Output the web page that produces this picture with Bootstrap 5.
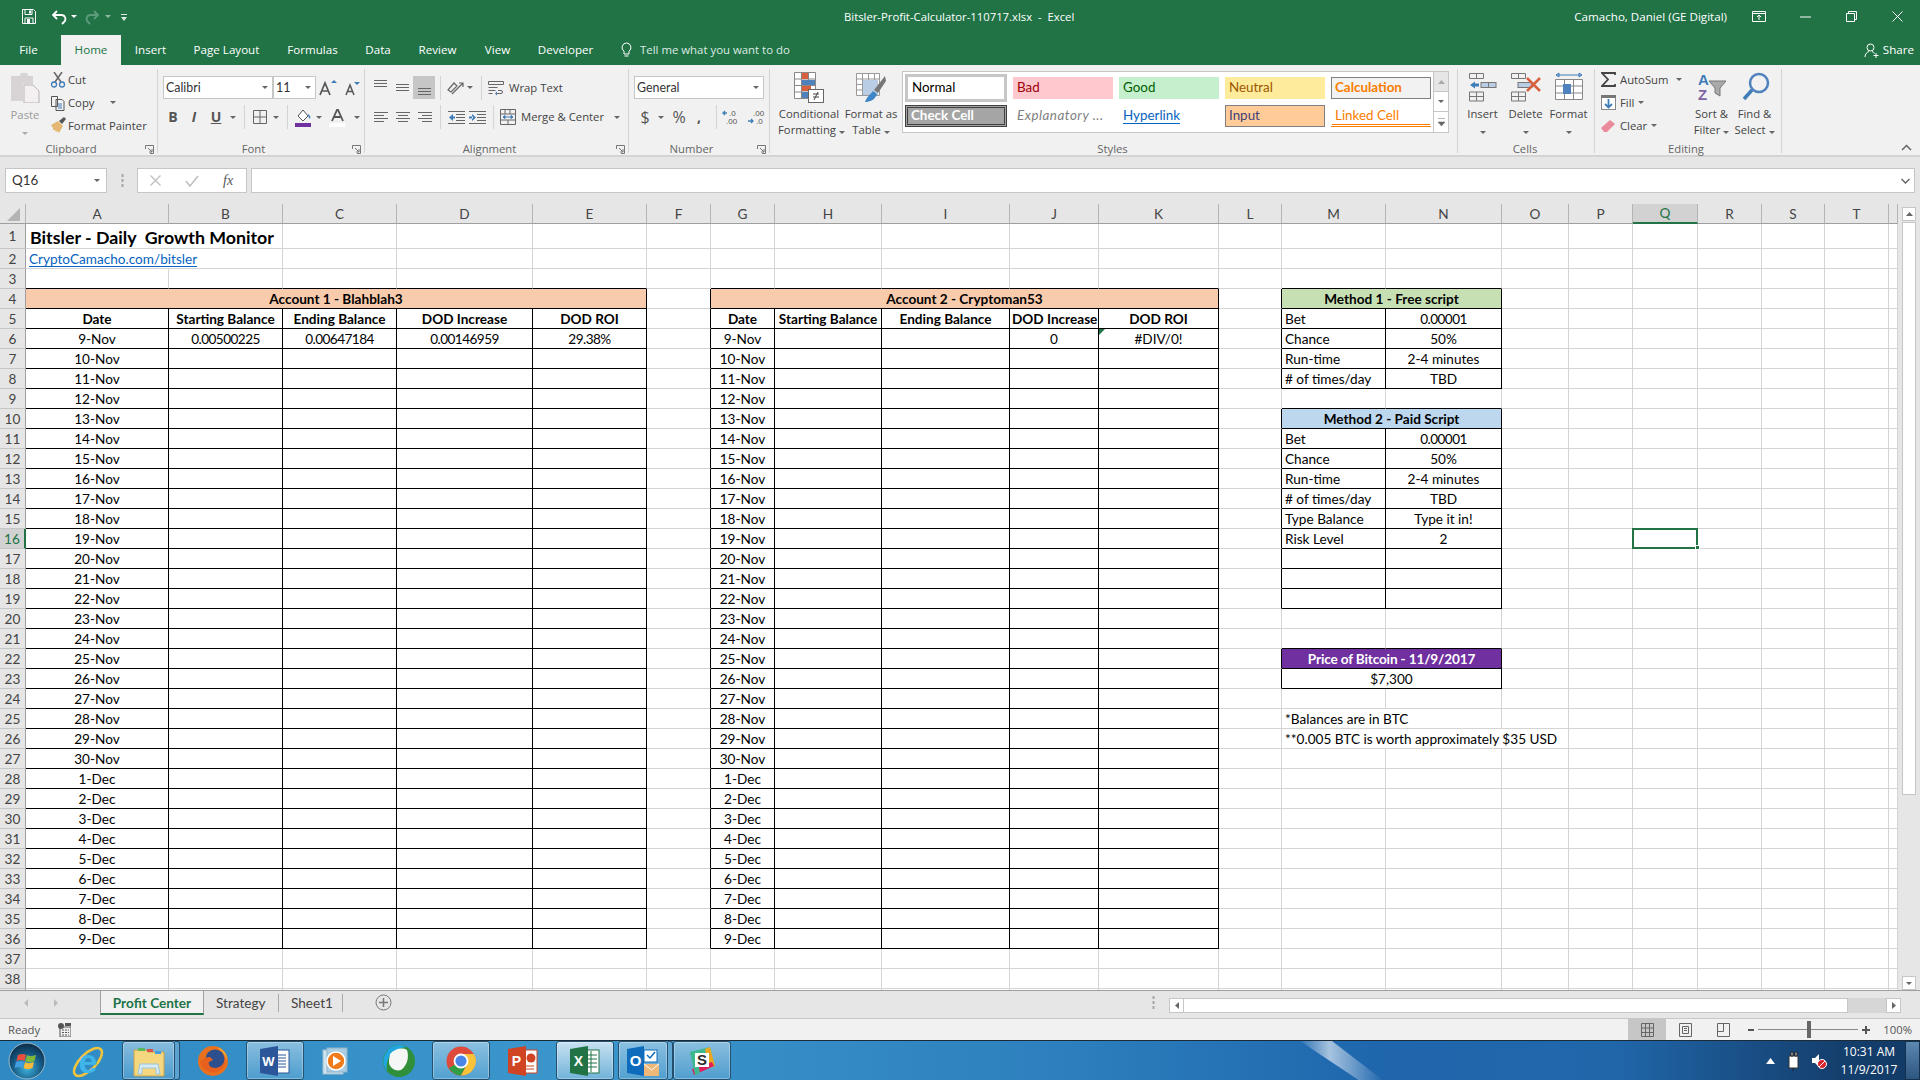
<!DOCTYPE html>
<html lang="en">
<head>
  <meta charset="UTF-8">
  <title>Bitsler-Profit-Calculator-110717.xlsx - Excel</title>
  <link href="https://cdn.jsdelivr.net/npm/bootstrap@5.3.0/dist/css/bootstrap.min.css" rel="stylesheet">
  <style>
    html, body { margin: 0; height: 100%; overflow: hidden; }
    body { width: 1920px; height: 1080px; background: #f1f1f1; color: #444; font: 11.3px/14px "Open Sans", sans-serif; }
    svg { display: block; flex: none; }

    .tw-10{width:10px}.tw-12{width:12px}.tw-18{width:18px}.tw-20{width:20px}.tw-22{width:22px}.tw-43{width:43px}
    .tw-50{width:50px}.tw-53{width:53px}.tw-54{width:54px}.tw-58{width:58px}.tw-62{width:62px}.tw-66{width:66px}
    .tw-68{width:68px}.tw-89{width:89px}
    .ms-1px{margin-left:1px}.ms-2px{margin-left:2px}.ms-12{margin-left:12px}.ms-13{margin-left:13px}.ms-17{margin-left:17px}.ms-18{margin-left:18px}
    .ms-11{margin-left:11px}.ms-6px{margin-left:6px}

    /* title bar + tabs */
    .xl-head { height: 65px; background: #217346; color: #fff; flex: none; }
    .xl-title { height: 33px; }
    .xl-qat { width: 844px; padding-left: 22px; }
    .xl-doc { font-size: 11.3px; }
    .xl-user { margin-right: 9px; font-size: 11.6px; }
    .xl-winbtn { width: 46px; height: 33px; }
    .xl-tabs { height: 30px; margin-top: 2px; font-size: 11.6px; }
    .xl-tab { height: 30px; line-height: 30px; text-align: center; color: #fff; flex: none; }
    .xl-tab.on { background: #f1f1f1; color: #217346; }
    .xl-tell { color: #dcebe3; margin-left: 14px; font-size: 11.4px; }
    .xl-share { margin-right: 6px; }

    /* ribbon */
    .rb { height: 92px; background: #f1f1f1; border-bottom: 2px solid #d4d4d4; flex: none; padding-top: 4px; }
    .rg { height: 84px; border-right: 1px solid #d4d4d4; position: relative; flex: none; }
    .rg-clip { width: 158px; } .rg-font { width: 207px; padding-left: 5px; } .rg-align { width: 264px; padding-left: 4px; }
    .rg-num { width: 141px; padding-left: 5px; } .rg-sty { width: 688px; padding-left: 8px; }
    .rg-cells { width: 137px; padding-left: 3px; } .rg-edit { width: 187px; padding-left: 6px; }
    .rg-body { height: 73px; display: flow-root; }
    .rg-label { height: 14px; text-align: center; color: #666; }
    .rg-clip .rg-label { padding-right: 15px; } .rg-font .rg-label { padding-right: 20px; } .rg-align .rg-label { padding-right: 18px; }
    .rg-num .rg-label { padding-right: 20px; } .rg-sty .rg-label { padding-right: 10px; } .rg-cells .rg-label { padding-right: 5px; }
    .rg-edit .rg-label { padding-right: 10px; }
    .rg-launch { position: absolute; right: 3px; bottom: -1px; }
    .rb-stack { margin-top: -1px; }
    .rb-line { height: 23px; white-space: nowrap; }
    .rb-row1 { height: 23px; margin-top: 7px; }
    .rb-row2 { height: 24px; margin-top: 6px; }
    .ti { height: 23px; flex: none; display: flex; align-items: center; justify-content: center; }
    .ti.on { background: #c6c6c6; }
    .ti-b { font-size: 14px; font-weight: 700; color: #555; }
    .ti-n { font-size: 16px; color: #555; }
    .rsep { width: 1px; height: 24px; background: #d4d4d4; margin: 0 5px; flex: none; }
    .caret { width: 0; height: 0; border: 3px solid transparent; border-top: 3.5px solid #666; border-bottom: 0; flex: none; display: inline-block; }
    .caret.dim { border-top-color: #aaa; }
    .caret.lite { border-top-color: #fff; }
    .caret.mid { border-top-color: #8fb9a3; }
    .rb-sel { height: 23px; background: #fff; border: 1px solid #c6c6c6; padding: 0 4px 0 2px; font: 12.4px/21px "Lato", sans-serif; color: #333; flex: none; }
    .rb-sel.fnt { width: 110px; }
    .rb-sel.siz { width: 43px; }
    .rb-sel.gen { width: 130px; }
    .bigbtn { flex: none; text-align: center; line-height: 16px; }
    .bigbtn .bic { height: 31px; margin-top: 3px; margin-bottom: 3px; }
    .dimtxt { color: #9a9a9a; }

    .sty-gal { width: 547px; height: 62px; margin-top: 2px; background: #fff; border: 1px solid #c6c6c6; flex: none; }
    .sty-grid { display: grid; grid-template-columns: 102px 100px 100px 100px 100px; grid-auto-rows: 22px; column-gap: 6px; row-gap: 6px; padding: 5px 0 0 2px; width: 530px; }
    .sty { font: 13.4px/19px "Lato", sans-serif; padding-left: 3px; color: #000; border: 1px solid transparent; white-space: nowrap; overflow: hidden; }
    .sty-normal { outline: 3px solid #c6c6c6; margin: 0 3px; }
    .sty-bad { background: #ffc7ce; color: #9c0006; }
    .sty-good { background: #c6efce; color: #006100; }
    .sty-neutral { background: #ffeb9c; color: #9c5700; }
    .sty-calc { background: #f2f2f2; color: #fa7d00; font-weight: 700; border-color: #7f7f7f; }
    .sty-check { background: #a5a5a5; color: #fff; font-weight: 700; border: 3px double #3f3f3f; line-height: 15px; }
    .sty-expl { color: #7f7f7f; font-style: italic; letter-spacing: .5px; }
    .sty-link span { color: #0563c1; border-bottom: 1px solid #0563c1; }
    .sty-input { background: #fc9; color: #3f3f76; border-color: #7f7f7f; }
    .sty-linked { color: #fa7d00; border-bottom: 3px double #fa7d00; line-height: 18px; }
    .sty-scr { width: 15px; margin-left: auto; border-left: 1px solid #c6c6c6; }
    .sty-scr div { height: 20px; border-bottom: 1px solid #c6c6c6; }
    .sty-scr .off { background: #e6e6e6; }
    .sty-scr div:last-child { border-bottom: 0; }

    /* formula bar */
    .fx-bar { height: 47px; background: #e6e6e6; padding-top: 11px; flex: none; }
    .fx-box { height: 25px; background: #fff; border: 1px solid #c6c6c6; flex: none; }
    .fx-name { width: 102px; margin-left: 5px; padding: 0 6px; font: 13.4px/23px "Lato", sans-serif; color: #333; }
    .fx-dots { width: 30px; height: 25px; }
    .fx-btns { width: 110px; }
    .fx-input { width: 1664px; margin-left: 4px; }
    .fx-f { font: italic 14px "Liberation Serif", serif; color: #555; }

    /* sheet */
    .xl-main { height: 786px; flex: none; background: #e6e6e6; }
    .xl-grid { width: 1898px; height: 786px; overflow: hidden; background: #fff; flex: none; }
    table.xl-sheet { border-collapse: separate; border-spacing: 0; table-layout: fixed; width: 1898px; font: 13.6px/18px "Lato", "Liberation Sans", sans-serif; color: #000; }
    .xl-sheet tr { height: 20px; }
    .xl-sheet tr.tall { height: 25px; }
    .xl-sheet td { padding: 0 2px; height: 20px; text-align: center; white-space: nowrap; overflow: visible; border-right: 1px solid #d4d4d4; border-bottom: 1px solid #d4d4d4; }
    .xl-sheet td.br { border-right-color: #000; }
    .xl-sheet td.bb { border-bottom-color: #000; }
    .xl-sheet th { font-weight: 400; color: #444; background: #e6e6e6; text-align: center; padding: 0; }
    .xl-sheet thead th { height: 19px; border-right: 1px solid #b4b4b4; border-bottom: 1px solid #9f9f9f; }
    .xl-sheet tbody th { border-right: 1px solid #9f9f9f; border-bottom: 1px solid #c6c6c6; }
    .xl-sheet th.sel { background: #d2d2d2; color: #217346; }
    .xl-sheet thead th.sel { border-bottom: 2px solid #217346; }
    .xl-sheet tbody th.sel { border-right: 2px solid #217346; }
    .xl-sheet td.lft { text-align: left; padding-left: 3px; }
    .xl-sheet td.b { font-weight: 700; }
    .xl-sheet td.num { letter-spacing: -.55px; }
    .xl-sheet td.dt { letter-spacing: -.15px; }
    .xl-sheet td.ttl { font-size: 17.8px; font-weight: 700; text-align: left; padding-left: 4px; white-space: pre; line-height: 22px; vertical-align: bottom; }
    .xl-sheet td.lnk span { color: #0563c1; border-bottom: 1px solid #0563c1; line-height: 14px; display: inline-block; }
    .xl-sheet td.f-org { background: #f8cbad; }
    .xl-sheet td.f-grn { background: #c6e0b4; }
    .xl-sheet td.f-blu { background: #bdd7ee; }
    .xl-sheet td.f-pur { background: #7030a0; color: #fff; }
    .xl-sheet td.warn { position: relative; }
    .xl-sheet td.warn::before { content: ""; position: absolute; left: 0; top: 0; border: 3px solid transparent; border-top-color: #217346; border-left-color: #217346; }
    .xl-sheet td.cur { position: relative; }
    .xl-sheet td.cur::before { content: ""; position: absolute; left: -1px; top: -1px; right: -1px; bottom: -1px; border: 2px solid #217346; }
    .xl-sheet td.cur::after { content: ""; position: absolute; right: -3px; bottom: -2px; width: 5px; height: 5px; background: #217346; border: 1px solid #fff; }
    .vscr { width: 22px; padding: 3px 4px 0; display: flex; flex-direction: column; }
    .vbtn { height: 14px; background: #fff; border: 1px solid #c6c6c6; flex: none; }
    .vthumb { height: 573px; margin-top: 1px; background: #fff; border: 1px solid #c6c6c6; flex: none; }

    /* sheet tabs + status */
    .xl-strip { height: 29px; background: #e6e6e6; border-top: 1px solid #9f9f9f; border-bottom: 1px solid #c6c6c6; flex: none; font: 13.6px/24px "Lato", sans-serif; color: #444; }
    .st-nav { width: 100px; }
    .st-tab { height: 24px; padding-left: 12px; flex: none; position: relative; }
    .st-tab.on { width: 104px; padding: 0; text-align: center; background: #f1f1f1; color: #217346; font-weight: 700; border-left: 1px solid #9f9f9f; border-right: 1px solid #9f9f9f; border-bottom: 2px solid #217346; }
    .st-a { width: 75px; } .st-b { width: 64px; }
    .st-rule { border-right: 1px solid #aaa; height: 18px; margin-top: 3px; line-height: 18px; }
    .st-plus { margin-left: 32px; width: 777px; }
    .hs-dots { width: 17px; }
    .hs { width: 732px; height: 15px; margin-top: 7px; background: #d6d6d6; }
    .hs-btn { width: 15px; height: 15px; background: #fff; border: 1px solid #c6c6c6; flex: none; }
    .hs-thumb { width: 664px; height: 15px; background: #fff; border: 1px solid #c6c6c6; border-left: 0; flex: none; }
    .xl-status { height: 21px; background: #f1f1f1; flex: none; padding-left: 8px; color: #555; }
    .sb-view { width: 38px; height: 21px; }
    .sb-view.on { background: #c6c6c6; }
    .sb-zoom { width: 100px; height: 1px; background: #888; position: relative; margin: 0 4px; }
    .sb-zoom::after { content: ""; position: absolute; left: 49px; top: -8px; width: 4px; height: 17px; background: #666; }

    /* taskbar */
    .tk { height: 40px; flex: none; position: relative; overflow: hidden; border-top: 1px solid #1c2b38; background: linear-gradient(90deg, #2f8ac4 0%, #3b96cc 30%, #2d80bd 55%, #1f66ad 72%, #2067aa 84%, #143e6c 96%, #123a66 100%); }
    .tk-glow { position: absolute; left: 0; top: 0; }
    .tk-slot { height: 39px; flex: none; position: relative; display: flex; align-items: center; justify-content: center; }
    .tk-on { background: linear-gradient(180deg, rgba(255,255,255,.42), rgba(255,255,255,.12)); border: 1px solid #23506e; border-radius: 3px; box-shadow: inset 0 0 0 1px rgba(255,255,255,.3); }
    .tk-on.act { background: linear-gradient(180deg, rgba(255,255,255,.72), rgba(255,255,255,.28)); }
    .tk-gap4 { width: 4px; flex: none; }
    .tk-stack { width: 5px; height: 39px; flex: none; border: 1px solid #23506e; border-left: 0; border-radius: 0 3px 3px 0; background: rgba(255,255,255,.2); }
    .tk-tray { position: relative; margin-left: auto; color: #fff; font: 12px/18px "Open Sans", sans-serif; }
    .tk-clock { width: 72px; text-align: center; margin-left: 6px; }
    .tk-show { width: 15px; height: 39px; background: linear-gradient(180deg, #5d88b0, #2c5580); border: 1px solid #16314f; }
  </style>
</head>
<body class="d-flex flex-column">

<!-- Title bar and ribbon tabs -->
<div class="xl-head">
  <div class="xl-title d-flex align-items-center">
    <div class="xl-qat d-flex align-items-center">
      <svg width="14" height="15" viewBox="0 0 14 15"><path d="M.5.500h11l2 2v12H.5z" fill="none" stroke="#fff"/><path d="M3 1v4.500h7V1M3 14V9h8v5" fill="none" stroke="#fff"/><rect x="7" y="1.500" width="2" height="3" fill="#fff"/><rect x="5" y="10" width="3" height="4" fill="#fff"/></svg>
      <svg class="ms-3" width="15" height="16" viewBox="0 0 15 16"><path d="M5 2 1 6l4 4M1.500 6H10a4 4 0 0 1 2 7l-2 2" fill="none" stroke="#fff" stroke-width="1.800"/></svg>
      <span class="caret lite ms-1"></span>
      <svg class="ms-2" width="16" height="16" viewBox="0 0 16 16"><path d="M9 2l4 4-4 4M12.500 6H5a4 4 0 0 0-2 7l2 2" fill="none" stroke="#5f9c7e" stroke-width="1.800"/></svg>
      <span class="caret mid ms-1"></span>
      <svg class="ms-2" width="10" height="10" viewBox="0 0 10 10"><path d="M2 2h6v1H2zM2 5h6L5 9z" fill="#dcebe3"/></svg>
    </div>
    <div class="xl-doc">Bitsler-Profit-Calculator-110717.xlsx&nbsp; -&nbsp; Excel</div>
    <div class="ms-auto d-flex align-items-center">
      <div class="xl-user">Camacho, Daniel (GE Digital)</div>
      <div class="xl-winbtn d-flex align-items-center justify-content-center"><svg width="14" height="11" viewBox="0 0 14 11"><path d="M.5.500h13v10H.5zM.5 2.500h13M7 9V4M5 6l2-2 2 2" fill="none" stroke="#fff"/></svg></div>
      <div class="xl-winbtn d-flex align-items-center justify-content-center"><svg width="11" height="2" viewBox="0 0 11 2"><path d="M0 1h11" stroke="#fff"/></svg></div>
      <div class="xl-winbtn d-flex align-items-center justify-content-center"><svg width="11" height="11" viewBox="0 0 11 11"><path d="M.5 2.500h8v8h-8zM2.500 2.500V.5h8v8H8.500" fill="none" stroke="#fff"/></svg></div>
      <div class="xl-winbtn d-flex align-items-center justify-content-center"><svg width="11" height="11" viewBox="0 0 11 11"><path d="M.5.500l10 10M10.500.5l-10 10" stroke="#fff"/></svg></div>
    </div>
  </div>
  <div class="xl-tabs d-flex align-items-center" id="tabRow"></div>
</div>

<!-- Ribbon -->
<div class="rb d-flex">
  <section class="rg rg-clip">
    <div class="rg-body d-flex">
      <div class="bigbtn tw-50 dimtxt">
        <svg class="mx-auto mt-1" width="30" height="30" viewBox="0 0 30 30"><path d="M1 3h9l1-3h6l1 3h5v8H13v17H1z" fill="#d8d3d5"/><path d="M14 12h9l6 6v12H14z" fill="#f4f0f2" stroke="#b9b4b6"/></svg>
        <div class="mt-1">Paste</div>
        <span class="caret dim mt-1"></span>
      </div>
      <div class="rb-stack">
        <div class="rb-line d-flex align-items-center"><svg class="tw-18" width="18" height="16" viewBox="0 0 18 16"><path d="M4 0l7 10M12 0 5 10" stroke="#666" stroke-width="1.500"/><circle cx="4" cy="12.500" r="2.500" fill="none" stroke="#3f7cb8" stroke-width="1.300"/><circle cx="12" cy="12.500" r="2.500" fill="none" stroke="#3f7cb8" stroke-width="1.300"/></svg>Cut</div>
        <div class="rb-line d-flex align-items-center"><svg class="tw-18" width="18" height="16" viewBox="0 0 18 16"><path d="M1.500 1.500h6v10h-6zM6 4.500h6l2 2v9H6z" fill="#f1f1f1" stroke="#555"/><path d="M8 9h4M8 11h4M8 13h4" stroke="#3f7cb8"/></svg>Copy<span class="caret ms-3"></span></div>
        <div class="rb-line d-flex align-items-center"><svg class="tw-18" width="18" height="17" viewBox="0 0 18 17"><path d="M9 4l5-4 2 2-4 5z" fill="#555"/><path d="M1 8l7-4 5 5-4 7-2-2-1 1-1-2-2 0 0-2z" fill="#e4b773"/></svg>Format Painter</div>
      </div>
    </div>
    <div class="rg-label">Clipboard</div>
    <svg class="rg-launch" width="9" height="9" viewBox="0 0 9 9"><path d="M.5 4V.5h8v8H5M3 3l4 4M7 4v3H4" fill="none" stroke="#777"/></svg>
  </section>

  <section class="rg rg-font">
    <div class="rg-body">
      <div class="rb-row1 d-flex align-items-center">
        <div class="rb-sel fnt d-flex align-items-center justify-content-between">Calibri<span class="caret"></span></div>
        <div class="rb-sel siz d-flex align-items-center justify-content-between">11<span class="caret"></span></div>
        <div class="ti tw-22 ms-1px"><svg width="20" height="18" viewBox="0 0 20 18"><path d="M2 16 7 4l5 12M4 12h6" fill="none" stroke="#555" stroke-width="1.700"/><path d="M13 4l3-3 3 3z" fill="#3f7cb8"/></svg></div>
        <div class="ti tw-18 ms-1"><svg width="15" height="16" viewBox="0 0 15 16"><path d="M1 15 5 5l4 10M2.500 11.500h5" fill="none" stroke="#555" stroke-width="1.500"/><path d="M9 2h6l-3 3z" fill="#3f7cb8"/></svg></div>
      </div>
      <div class="rb-row2 d-flex align-items-center">
        <div class="ti tw-20 ti-b">B</div>
        <div class="ti tw-22 ti-b fst-italic">I</div>
        <div class="ti tw-22 ti-b text-decoration-underline">U</div>
        <div class="ti tw-12"><span class="caret"></span></div>
        <div class="rsep"></div>
        <div class="ti tw-20"><svg width="14" height="14" viewBox="0 0 14 14"><path d="M.5.500h13v13H.5zM7 .5v13M.5 7h13" fill="none" stroke="#666"/></svg></div>
        <div class="ti tw-12"><span class="caret"></span></div>
        <div class="rsep"></div>
        <div class="ti tw-20"><svg width="17" height="19" viewBox="0 0 17 19"><path d="M3 8l5-6 5 6-5 5z" fill="#fff" stroke="#555"/><path d="M13 6c2 1 3 3 2 5-1-1-2-3-2-5z" fill="#3f7cb8"/><rect y="15" width="16" height="4" fill="#7030a0"/></svg></div>
        <div class="ti tw-12"><span class="caret"></span></div>
        <div class="ti tw-20 ms-2px"><svg width="17" height="19" viewBox="0 0 17 19"><path d="M3 13 8 2h1l5 11M5 9h7" fill="none" stroke="#555" stroke-width="1.800"/><rect y="15" width="16" height="4" fill="#fff"/></svg></div>
        <div class="ti tw-12 ms-1"><span class="caret"></span></div>
      </div>
    </div>
    <div class="rg-label">Font</div>
    <svg class="rg-launch" width="9" height="9" viewBox="0 0 9 9"><path d="M.5 4V.5h8v8H5M3 3l4 4M7 4v3H4" fill="none" stroke="#777"/></svg>
  </section>

  <section class="rg rg-align">
    <div class="rg-body">
      <div class="rb-row1 d-flex align-items-center">
        <div class="ti tw-22"><svg width="15" height="17" viewBox="0 0 15 17"><path d="M1 1.500h13M1 4.500h13M1 7.500h13" stroke="#666"/></svg></div>
        <div class="ti tw-22"><svg width="15" height="17" viewBox="0 0 15 17"><path d="M1 5.500h13M1 8.500h13M1 11.500h13" stroke="#666"/></svg></div>
        <div class="ti tw-22 on"><svg width="15" height="17" viewBox="0 0 15 17"><path d="M1 9.500h13M1 12.500h13M1 15.500h13" stroke="#666"/></svg></div>
        <div class="rsep"></div>
        <div class="ti tw-18"><svg width="17" height="16" viewBox="0 0 17 16"><path d="M1 10l6-7 3 3-6 6zM5 14l11-11M12 3h4v4" fill="none" stroke="#666" stroke-width="1.200"/></svg></div>
        <div class="ti tw-12"><span class="caret"></span></div>
        <div class="rsep ms-17"></div>
        <div class="ti tw-18"><svg width="16" height="16" viewBox="0 0 16 16"><path d="M.5 1.500h15v3H.5zM.5 7.500h9M.5 10.500h7M.5 13.500h4M10 10.500h3a1.500 1.500 0 0 1 0 3H9" fill="none" stroke="#666"/><path d="M9 11.500l-2 2 2 2z" fill="#3f7cb8"/></svg></div>
        <span class="ms-1 text-nowrap">Wrap Text</span>
      </div>
      <div class="rb-row2 d-flex align-items-center">
        <div class="ti tw-22"><svg width="15" height="13" viewBox="0 0 15 13"><path d="M1 1.500h14M1 4.500h10M1 7.500h14M1 10.500h10" stroke="#666"/></svg></div>
        <div class="ti tw-22"><svg width="15" height="13" viewBox="0 0 15 13"><path d="M1 1.500h14M3 4.500h10M1 7.500h14M3 10.500h10" stroke="#666"/></svg></div>
        <div class="ti tw-22"><svg width="15" height="13" viewBox="0 0 15 13"><path d="M1 1.500h14M5 4.500h10M1 7.500h14M5 10.500h10" stroke="#666"/></svg></div>
        <div class="rsep"></div>
        <div class="ti tw-20"><svg width="17" height="13" viewBox="0 0 17 13"><path d="M0 .5h17M8 3.500h9M8 6.500h9M8 9.500h9M0 12.500h17" stroke="#666"/><path d="M1 6.500 5 3v7zM4 5.500h3v2H4z" fill="#3f7cb8"/></svg></div>
        <div class="ti tw-22"><svg width="17" height="13" viewBox="0 0 17 13"><path d="M0 .5h17M8 3.500h9M8 6.500h9M8 9.500h9M0 12.500h17" stroke="#666"/><path d="M7 6.500 3 3v7zM0 5.500h4v2H0z" fill="#3f7cb8"/></svg></div>
        <div class="rsep"></div>
        <div class="ti tw-18"><svg width="16" height="16" viewBox="0 0 16 16"><path d="M.5.500h15v15H.5zM.5 5h15M.5 11h15M5 .5V5M10 .5V5M8 11v4.500" fill="none" stroke="#666"/><path d="M3 8h10M3 8l2-1.500v3zM13 8l-2-1.500v3z" fill="#3f7cb8" stroke="#3f7cb8"/></svg></div>
        <span class="ms-1 text-nowrap">Merge &amp; Center</span>
        <span class="caret ms-auto me-2"></span>
      </div>
    </div>
    <div class="rg-label">Alignment</div>
    <svg class="rg-launch" width="9" height="9" viewBox="0 0 9 9"><path d="M.5 4V.5h8v8H5M3 3l4 4M7 4v3H4" fill="none" stroke="#777"/></svg>
  </section>

  <section class="rg rg-num">
    <div class="rg-body">
      <div class="rb-row1 d-flex align-items-center">
        <div class="rb-sel gen d-flex align-items-center justify-content-between">General<span class="caret"></span></div>
      </div>
      <div class="rb-row2 d-flex align-items-center">
        <div class="ti tw-22 ti-n">$</div>
        <div class="ti tw-10"><span class="caret"></span></div>
        <div class="ti tw-22 ms-2px ti-n">%</div>
        <div class="ti tw-18 ti-b">,</div>
        <div class="rsep ms-2"></div>
        <div class="ti tw-20 lh-1"><svg width="20" height="16" viewBox="0 0 20 16"><path d="M5 4H1M3 2 1 4l2 2" fill="none" stroke="#3f7cb8" stroke-width="1.300"/><text x="7" y="7" font-size="8" font-family="Liberation Sans" fill="#555">.0</text><text x="4" y="15" font-size="8" font-family="Liberation Sans" fill="#555">.00</text></svg></div>
        <div class="ti tw-22 ms-1 lh-1"><svg width="20" height="16" viewBox="0 0 20 16"><text x="6" y="7" font-size="8" font-family="Liberation Sans" fill="#555">.00</text><path d="M1 12h5M4 10l2 2-2 2" fill="none" stroke="#3f7cb8" stroke-width="1.300"/><text x="9" y="15" font-size="8" font-family="Liberation Sans" fill="#555">.0</text></svg></div>
      </div>
    </div>
    <div class="rg-label">Number</div>
    <svg class="rg-launch" width="9" height="9" viewBox="0 0 9 9"><path d="M.5 4V.5h8v8H5M3 3l4 4M7 4v3H4" fill="none" stroke="#777"/></svg>
  </section>

  <section class="rg rg-sty">
    <div class="rg-body d-flex">
      <div class="bigbtn tw-62">
        <div class="bic"><svg class="mx-auto" width="30" height="31" viewBox="0 0 30 31"><path d="M.5.500h21v26H.5zM7.500.5v26M14.500.5v26M.5 7h21M.5 13.500h21M.5 20h21" fill="#fff" stroke="#888"/><rect x="8" y="1" width="6" height="6" fill="#d9603f"/><rect x="8" y="8" width="13" height="5" fill="#4f81bd"/><rect x="8" y="14" width="9" height="5" fill="#d9603f"/><rect x="8" y="20" width="6" height="6" fill="#4f81bd"/><rect x="14.500" y="17.500" width="15" height="13" fill="#fff" stroke="#666"/><path d="M19 22h6M19 25h6M24 20l-4 8" stroke="#444" fill="none"/></svg></div>
        <div>Conditional</div>
        <div class="text-nowrap">Formatting <span class="caret"></span></div>
      </div>
      <div class="bigbtn tw-62">
        <div class="bic"><svg class="mx-auto" width="30" height="31" viewBox="0 0 30 31"><path d="M.5 1.500h23v22H.5zM6.500 1.500v22M12.500 1.500v22M18.500 1.500v22M.5 7h23M.5 12.500h23M.5 18h23" fill="#fff" stroke="#999"/><rect x="7" y="8" width="15" height="15" fill="#b9cde5"/><path d="M29 4 18 18l4 3 8-12z" fill="#777"/><path d="M17 19c-2 3-6 5-8 11 5 0 10-2 12-8z" fill="#3f86c9"/></svg></div>
        <div class="text-nowrap">Format as</div>
        <div class="text-nowrap">Table <span class="caret"></span></div>
      </div>
      <div class="sty-gal d-flex">
        <div class="sty-grid">
          <div class="sty sty-normal">Normal</div>
          <div class="sty sty-bad">Bad</div>
          <div class="sty sty-good">Good</div>
          <div class="sty sty-neutral">Neutral</div>
          <div class="sty sty-calc">Calculation</div>
          <div class="sty sty-check">Check Cell</div>
          <div class="sty sty-expl">Explanatory ...</div>
          <div class="sty sty-link"><span>Hyperlink</span></div>
          <div class="sty sty-input">Input</div>
          <div class="sty sty-linked">Linked Cell</div>
        </div>
        <div class="sty-scr">
          <div class="off d-flex align-items-center justify-content-center"><svg width="7" height="4" viewBox="0 0 7 4"><path d="M0 4l3.500-4 3.500 4z" fill="#aaa"/></svg></div>
          <div class="d-flex align-items-center justify-content-center"><span class="caret"></span></div>
          <div class="d-flex flex-column align-items-center justify-content-center"><svg width="7" height="8" viewBox="0 0 7 8"><path d="M0 .5h7M0 4l3.500 4 3.500-4z" fill="#666" stroke="#666" stroke-width=".5"/></svg></div>
        </div>
      </div>
    </div>
    <div class="rg-label">Styles</div>
  </section>

  <section class="rg rg-cells">
    <div class="rg-body d-flex">
      <div class="bigbtn tw-43">
        <div class="bic"><svg class="mx-auto" width="28" height="30" viewBox="0 0 28 30"><path d="M.5 1.500h14v5H.5zM7.500 1.500v5M.5 20h14v9H.5zM.5 24.500h14M7.500 20v9" fill="none" stroke="#777"/><rect x="12" y="10.500" width="15" height="5" fill="#b9cde5" stroke="#777"/><path d="M19.500 10.500v5" stroke="#777"/><path d="M1 13l5-3.500v2h4v3H6v2z" fill="#3f7cb8"/></svg></div>
        <div>Insert</div>
        <span class="caret d-inline-block mt-2"></span>
      </div>
      <div class="bigbtn tw-43">
        <div class="bic"><svg class="mx-auto" width="30" height="30" viewBox="0 0 30 30"><path d="M.5 1.500h14v5H.5zM7.500 1.500v5M.5 20h14v9H.5zM.5 24.500h14M7.500 20v9" fill="none" stroke="#777"/><rect x="7" y="10.500" width="14" height="5" fill="#b9cde5" stroke="#777"/><path d="M16 6l13 13M29 6 16 19" stroke="#d9603f" stroke-width="2.500"/></svg></div>
        <div>Delete</div>
        <span class="caret d-inline-block mt-2"></span>
      </div>
      <div class="bigbtn tw-43">
        <div class="bic"><svg class="mx-auto" width="28" height="30" viewBox="0 0 28 30"><path d="M1 3h26M1 3l3-2v4zM27 3l-3-2v4z" fill="none" stroke="#3f7cb8"/><path d="M.5 7.500h27v20H.5zM9.500 7.500v20M18.500 7.500v20M.5 14h27M.5 21h27" fill="#fff" stroke="#888"/><rect x="8" y="12" width="8" height="10" fill="#4f81bd"/></svg></div>
        <div>Format</div>
        <span class="caret d-inline-block mt-2"></span>
      </div>
    </div>
    <div class="rg-label">Cells</div>
  </section>

  <section class="rg rg-edit">
    <div class="rg-body d-flex">
      <div class="tw-89 rb-stack">
        <div class="rb-line d-flex align-items-center"><svg class="me-1" width="15" height="15" viewBox="0 0 15 15"><path d="M14 3V1H1l6 6.500L1 14h13v-2" fill="none" stroke="#444" stroke-width="1.800"/></svg>AutoSum<span class="caret ms-auto me-2"></span></div>
        <div class="rb-line d-flex align-items-center"><svg class="me-1" width="15" height="15" viewBox="0 0 15 15"><rect x=".5" y=".5" width="14" height="14" fill="#fff" stroke="#888"/><rect width="15" height="3" fill="#777"/><path d="M7.500 4v8M4 9l3.500 3.500L11 9" fill="none" stroke="#3f7cb8" stroke-width="1.800"/></svg>Fill <span class="caret ms-1"></span></div>
        <div class="rb-line d-flex align-items-center"><svg class="me-1" width="15" height="15" viewBox="0 0 15 15"><path d="M0 10 9 2l5 4-8 8H3z" fill="#e98b9a"/></svg>Clear <span class="caret ms-1"></span></div>
      </div>
      <div class="bigbtn tw-43">
        <div class="bic"><svg class="mx-auto" width="30" height="30" viewBox="0 0 30 30"><text x="1" y="13" font-size="15" font-weight="700" font-family="Liberation Sans" fill="#3f7cb8">A</text><text x="1" y="28" font-size="15" font-weight="700" font-family="Liberation Sans" fill="#8064a2">Z</text><path d="M12 9h17l-6 7v8l-5-3v-5z" fill="#aaa" stroke="#777"/></svg></div>
        <div>Sort &amp;</div>
        <div class="text-nowrap">Filter <span class="caret"></span></div>
      </div>
      <div class="bigbtn tw-43">
        <div class="bic"><svg class="mx-auto" width="30" height="30" viewBox="0 0 30 30"><circle cx="19" cy="11" r="9" fill="#f1f1f1" stroke="#4f81bd" stroke-width="2.500"/><path d="M12 18 4 27" stroke="#3f7cb8" stroke-width="3.500"/></svg></div>
        <div>Find &amp;</div>
        <div class="text-nowrap">Select <span class="caret"></span></div>
      </div>
    </div>
    <div class="rg-label">Editing</div>
  </section>
  <div class="flex-fill d-flex align-items-end justify-content-end pe-2 pb-1">
    <svg width="11" height="7" viewBox="0 0 11 7"><path d="M1 6l4.500-4.500L10 6" fill="none" stroke="#666" stroke-width="1.500"/></svg>
  </div>
</div>

<!-- Formula bar -->
<div class="fx-bar d-flex">
  <div class="fx-box fx-name d-flex align-items-center justify-content-between">Q16<span class="caret"></span></div>
  <div class="fx-dots d-flex align-items-center justify-content-center"><svg width="3" height="13" viewBox="0 0 3 13"><path d="M1.500 0v3M1.500 5v3M1.500 10v3" stroke="#a5a5a5" stroke-width="2"/></svg></div>
  <div class="fx-box fx-btns d-flex align-items-center">
    <svg class="ms-12" width="11" height="11" viewBox="0 0 11 11"><path d="M.5.500l10 10M10.500.5l-10 10" stroke="#c0c0c0" stroke-width="1.400"/></svg>
    <svg class="ms-4" width="14" height="12" viewBox="0 0 14 12"><path d="M1 6l4 5 8-10" fill="none" stroke="#c0c0c0" stroke-width="1.600"/></svg>
    <span class="fx-f ms-4">fx</span>
  </div>
  <div class="fx-box fx-input d-flex align-items-center justify-content-end pe-1"><svg width="9" height="6" viewBox="0 0 9 6"><path d="M.5 1l4 4 4-4" fill="none" stroke="#666" stroke-width="1.500"/></svg></div>
</div>

<!-- Worksheet -->
<div class="xl-main d-flex">
  <div class="xl-grid"><table class="xl-sheet" id="sheet"></table></div>
  <div class="vscr">
    <div class="vbtn d-flex align-items-center justify-content-center"><svg width="7" height="4" viewBox="0 0 7 4"><path d="M0 4l3.500-4 3.500 4z" fill="#666"/></svg></div>
    <div class="vthumb"></div>
    <div class="vbtn mt-auto d-flex align-items-center justify-content-center"><span class="caret"></span></div>
  </div>
</div>

<!-- Sheet tabs -->
<div class="xl-strip d-flex">
  <div class="st-nav d-flex align-items-center"><svg class="ms-4 mb-1" width="5" height="8" viewBox="0 0 5 8"><path d="M4 0 0 4l4 4z" fill="#bbb"/></svg><svg class="ms-4 mb-1" width="5" height="8" viewBox="0 0 5 8"><path d="M1 0l4 4-4 4z" fill="#bbb"/></svg></div>
  <div class="st-tab on">Profit Center</div>
  <div class="st-tab st-a st-rule">Strategy</div>
  <div class="st-tab st-b st-rule">Sheet1</div>
  <div class="st-plus d-flex align-items-center mb-1"><svg width="17" height="17" viewBox="0 0 17 17"><circle cx="8.500" cy="8.500" r="7.500" fill="none" stroke="#777"/><path d="M8.500 4v9M4 8.500h9" stroke="#777" stroke-width="1.500"/></svg></div>
  <div class="hs-dots d-flex align-items-center mb-1"><svg width="3" height="13" viewBox="0 0 3 13"><path d="M1.500 0v3M1.500 5v3M1.500 10v3" stroke="#a5a5a5" stroke-width="2"/></svg></div>
  <div class="hs d-flex">
    <div class="hs-btn d-flex align-items-center justify-content-center"><svg width="4" height="7" viewBox="0 0 4 7"><path d="M4 0 0 3.500 4 7z" fill="#666"/></svg></div>
    <div class="hs-thumb"></div>
    <div class="hs-btn ms-auto d-flex align-items-center justify-content-center"><svg width="4" height="7" viewBox="0 0 4 7"><path d="M0 0l4 3.500L0 7z" fill="#666"/></svg></div>
  </div>
</div>

<!-- Status bar -->
<div class="xl-status d-flex align-items-center">
  <span>Ready</span>
  <svg class="ms-18" width="13" height="14" viewBox="0 0 13 14"><rect x="2" y="4" width="11" height="10" fill="none" stroke="#555"/><circle cx="3" cy="3" r="3" fill="#555"/><rect x="7" width="6" height="3" fill="#555"/><path d="M4 7h7M4 9.500h7M4 12h7" stroke="#555" stroke-dasharray="2 1"/></svg>
  <div class="ms-auto d-flex align-items-center">
    <div class="sb-view on d-flex align-items-center justify-content-center"><svg width="13" height="14" viewBox="0 0 13 14"><path d="M.5.500h12v13H.5zM4.500.5v13M8.500.5v13M.5 5h12M.5 9.500h12" fill="none" stroke="#666"/></svg></div>
    <div class="sb-view d-flex align-items-center justify-content-center"><svg width="13" height="14" viewBox="0 0 13 14"><path d="M.5.500h12v13H.5z" fill="none" stroke="#666"/><path d="M3.500 3.500h6v7h-6zM5 5.500h3M5 7.500h3" fill="none" stroke="#666"/></svg></div>
    <div class="sb-view d-flex align-items-center justify-content-center"><svg width="13" height="14" viewBox="0 0 13 14"><path d="M.5.500h12v13H.5zM.5 8.500h6V.5" fill="none" stroke="#666"/></svg></div>
    <svg class="ms-6px" width="6" height="4" viewBox="0 0 6 4"><rect y="1" width="6" height="2" fill="#555"/></svg>
    <div class="sb-zoom"></div>
    <svg width="8" height="8" viewBox="0 0 8 8"><path d="M4 0v8M0 4h8" stroke="#555" stroke-width="2"/></svg>
    <span class="ms-13 me-2">100%</span>
  </div>
</div>

<!-- Windows taskbar -->
<div class="tk d-flex">
  <svg class="tk-glow" width="1920" height="40" viewBox="0 0 1920 40"><defs><linearGradient id="sh" x1="0" x2="1"><stop offset="0" stop-color="#fff" stop-opacity=".05"/><stop offset=".35" stop-color="#fff" stop-opacity=".6"/><stop offset="1" stop-color="#fff" stop-opacity="0"/></linearGradient></defs><path d="M1300 0h32l52 40h-24z" fill="url(#sh)"/></svg>

  <div class="tk-slot tw-54"><svg width="38" height="38" viewBox="0 0 38 38"><defs><radialGradient id="orb" cx=".5" cy=".7" r=".7"><stop offset="0" stop-color="#3fb4dd"/><stop offset=".6" stop-color="#14557f"/><stop offset="1" stop-color="#0d2a44"/></radialGradient></defs><circle cx="19" cy="19" r="18" fill="url(#orb)" stroke="#9dbccd"/><path d="M10 13c3-1.500 6-1.500 8 0l-1.500 6c-2-1.500-5-1.500-8 0z" fill="#e8503a"/><path d="M19 13c2 1.500 5 1.500 9 0l-1.500 6c-3 1.500-7 1.500-9 0z" fill="#7fb93a"/><path d="M8 20c3-1.500 6-1.500 8 0l-1.500 6c-2-1.500-5-1.500-8 0z" fill="#3f9de0"/><path d="M17 20c2 1.500 5 1.500 9 0l-1.500 6c-3 1.500-7 1.500-9 0z" fill="#f6b93b"/></svg></div>
  <div class="tk-slot tw-68"><svg width="34" height="38" viewBox="0 0 34 38"><ellipse cx="17" cy="20" rx="18" ry="8" transform="rotate(-45 17 20)" fill="none" stroke="#f3c33c" stroke-width="2.600"/><text x="17" y="31" text-anchor="middle" font-size="34" font-weight="700" font-family="Liberation Sans" fill="#3fb5ea">e</text></svg></div>
  <div class="tk-slot tk-on tw-53"><svg width="32" height="32" viewBox="0 0 32 32"><path d="M1 5h12l2 2h16v24H1z" fill="#f4d77e" stroke="#caa34c"/><rect x="5" y="3" width="7" height="3" fill="#5cb85c"/><rect x="14" y="4" width="6" height="3" fill="#d9534f"/><rect x="22" y="6" width="6" height="3" fill="#3f9de0"/><path d="M7 19h18l2 10h-4v-6H9v6H5z" fill="#d7ebf5" stroke="#9cc4d8"/></svg></div>
  <div class="tk-stack"></div>
  <div class="tk-slot tw-66"><svg width="32" height="32" viewBox="0 0 32 32"><circle cx="16" cy="16" r="15" fill="#e8711f"/><circle cx="18" cy="14" r="9.500" fill="#2d4f8e"/><path d="M3 17c2 8 10 12 17 10s9-8 8-12c-1 5-6 8-10 8s-7-3-6-6l4-2-3-3c-3 0-6 1-10 5z" fill="#e8601d"/><path d="M20 2c6 2 10 7 10 13-2-6-5-9-10-13z" fill="#f6b93b"/></svg></div>
  <div class="tk-slot tk-on tw-58"><svg width="30" height="32" viewBox="0 0 30 32"><rect x="12" y="5" width="17" height="23" fill="#fff" stroke="#2b579a"/><path d="M15 10h11M15 13h11M15 16h11M15 19h11M15 22h11" stroke="#2b579a"/><path d="M0 4 18 1v30L0 28z" fill="#2b579a"/><text x="8.500" y="21" text-anchor="middle" font-size="13" font-weight="700" font-family="Liberation Sans" fill="#fff">W</text></svg></div>
  <div class="tk-slot tw-62"><svg width="26" height="28" viewBox="0 0 26 28"><rect x="1" y="3" width="20" height="24" fill="#cfe3ef" stroke="#9fbfd1"/><rect x="5" y="1" width="20" height="24" fill="#a9cde2" stroke="#8fb5ca"/><circle cx="14" cy="14" r="9" fill="#f07b1c" stroke="#fff" stroke-width="1.500"/><path d="M11 9l8 5-8 5z" fill="#fff"/></svg></div>
  <div class="tk-slot tw-66"><svg width="34" height="34" viewBox="0 0 34 34"><circle cx="17" cy="17" r="16" fill="#2f8f3a"/><path d="M17 1a16 16 0 0 0-12 26C3 15 10 5 24 3a16 16 0 0 0-7-2z" fill="#21a7e0"/><path d="M8 10c4-5 12-7 17-4 2 6 1 15-6 20-6 2-13-3-12-10z" fill="#f4f7f5"/></svg></div>
  <div class="tk-slot tk-on tw-58"><svg width="30" height="30" viewBox="0 0 30 30"><circle cx="15" cy="15" r="14.500" fill="#de4a3c"/><path d="M15 15 3 22a14.500 14.500 0 0 0 12 7.500l6-12z" fill="#2f9e44"/><path d="M15 8h13a14.500 14.500 0 0 1-13 21.500l6-11z" fill="#f8c33a"/><circle cx="15" cy="15" r="6.500" fill="#4a86e8" stroke="#fff" stroke-width="1.800"/></svg></div>
  <div class="tk-slot tw-66"><svg width="30" height="32" viewBox="0 0 30 32"><rect x="12" y="5" width="17" height="23" fill="#fff" stroke="#d04423"/><path d="M16 21h10M16 24h10" stroke="#d04423"/><circle cx="23" cy="13" r="4.500" fill="#d04423"/><path d="M0 4 18 1v30L0 28z" fill="#d04423"/><text x="8.500" y="21" text-anchor="middle" font-size="14" font-weight="700" font-family="Liberation Sans" fill="#fff">P</text></svg></div>
  <div class="tk-slot tk-on act tw-58"><svg width="30" height="32" viewBox="0 0 30 32"><rect x="13" y="5" width="16" height="23" fill="#fff" stroke="#217346"/><path d="M15 10h12M15 14h12M15 18h12M15 22h12M21 6v21" stroke="#217346"/><path d="M0 4 18 1v30L0 28z" fill="#217346"/><text x="8.500" y="21" text-anchor="middle" font-size="14" font-weight="700" font-family="Liberation Sans" fill="#fff">X</text></svg></div>
  <div class="tk-gap4"></div>
  <div class="tk-slot tk-on tw-50"><svg width="32" height="32" viewBox="0 0 32 32"><path d="M0 4 17 1v30L0 28z" fill="#0f6cbd"/><rect x="17" y="5" width="13" height="12" fill="#fff" stroke="#0f6cbd"/><path d="M20 10l3 3 5-6" fill="none" stroke="#0f6cbd" stroke-width="1.500"/><rect x="17" y="19" width="15" height="12" fill="#f0b878"/><path d="M17 19l7.500 6 7.500-6" fill="none" stroke="#fff"/><text x="8.500" y="21" text-anchor="middle" font-size="15" font-weight="700" font-family="Liberation Sans" fill="#fff">O</text></svg></div>
  <div class="tk-stack tw-12"></div>
  <div class="tk-slot tk-on tw-58"><svg width="28" height="30" viewBox="0 0 28 30"><path d="M2 6 22 1l1 6L4 12z" fill="#3eb890"/><path d="M22 1l5 19-6 2-4-19z" fill="#e9a820"/><path d="M26 20 6 29l-2-6 20-7z" fill="#e01e5a"/><path d="M2 6l5 23 5-2L8 5z" fill="#3eb890"/><rect x="7" y="7" width="14" height="14" fill="#fff"/><text x="14" y="19" text-anchor="middle" font-size="15" font-weight="700" font-family="Liberation Sans" fill="#2d2d2d">S</text></svg></div>

  <div class="tk-tray d-flex align-items-center">
    <svg width="9" height="6" viewBox="0 0 9 6"><path d="M0 6l4.500-6L9 6z" fill="#fff"/></svg>
    <svg class="ms-13" width="13" height="20" viewBox="0 0 13 20"><path d="M1 5h9v12H1z" fill="#fff" stroke="#333"/><path d="M3 1h2v4H3zM7 1h2v4H7zM5 17v3" stroke="#222" fill="#ddd"/></svg>
    <svg class="ms-11" width="15" height="18" viewBox="0 0 15 18"><path d="M0 6h3l4-4v13l-4-4H0z" fill="#fff"/><circle cx="10" cy="12" r="4.500" fill="#d9232e" stroke="#fff"/><path d="M7 15l6-6" stroke="#fff"/></svg>
    <div class="tk-clock">10:31 AM<br>11/9/2017</div>
    <div class="tk-show"></div>
  </div>
</div>

<script>
  // ribbon tabs: [label, slot width]
  const tabs = [['File', 61], ['Home', 60], ['Insert', 59], ['Page Layout', 93], ['Formulas', 79], ['Data', 52], ['Review', 67], ['View', 53], ['Developer', 83]];
  const tabRow = document.getElementById('tabRow');
  tabs.forEach(([label, w]) => {
    const a = document.createElement('a');
    a.className = 'xl-tab text-decoration-none' + (label === 'Home' ? ' on' : '') + (label === 'File' ? ' pe-1' : '');
    a.textContent = label;
    a.style.width = w + 'px';
    tabRow.appendChild(a);
  });
  tabRow.insertAdjacentHTML('beforeend', `
    <div class="xl-tell d-flex align-items-center">
      <svg class="me-2" width="11" height="16" viewBox="0 0 11 16"><path d="M5.500 1a4.500 4.500 0 0 0-2.500 8.200V12h5V9.200A4.500 4.500 0 0 0 5.500 1zM3.500 14h4" fill="none" stroke="#fff"/></svg>
      Tell me what you want to do
    </div>
    <div class="ms-auto d-flex align-items-center xl-share">
      <svg class="me-1" width="15" height="15" viewBox="0 0 15 15"><circle cx="6.500" cy="4.500" r="3.500" fill="none" stroke="#fff"/><path d="M1 14c0-3 2-5 4-5.500M8 8.500c1 .3 2 1 2.500 2M12 10v5M9.500 12.500h5" fill="none" stroke="#fff"/></svg>
      Share
    </div>`);

  // worksheet
  const letters = 'ABCDEFGHIJKLMNOPQRST'.split('').concat(['']);
  const colW = [143, 114, 114, 136, 114, 64, 64, 107, 128, 89, 120, 63, 104, 116, 67, 64, 65, 64, 63, 64, 9];
  const boxes = [[0, 4, 4, 36], [6, 10, 4, 36], [12, 13, 4, 8], [12, 13, 10, 19], [12, 13, 22, 23]];
  const boxed = (r, c) => boxes.some(b => c >= b[0] && c <= b[1] && r >= b[2] && r <= b[3]);

  const cells = {};
  const put = (r, c, text, cls = '', span = 1) => { cells[r + ':' + c] = { text, cls, span }; };

  put(1, 0, 'Bitsler - Daily  Growth Monitor', 'ttl', 2);
  put(2, 0, '<span>CryptoCamacho.com/bitsler</span>', 'lft lnk', 2);

  const heads = ['Date', 'Starting Balance', 'Ending Balance', 'DOD Increase', 'DOD ROI'];
  put(4, 0, 'Account 1 - Blahblah3', 'b f-org', 5);
  put(4, 6, 'Account 2 - Cryptoman53', 'b f-org', 5);
  heads.forEach((h, i) => { put(5, i, h, 'b'); put(5, 6 + i, h, 'b'); });

  const dates = [];
  for (let d = 9; d <= 30; d++) dates.push(d + '-Nov');
  for (let d = 1; d <= 9; d++) dates.push(d + '-Dec');
  dates.forEach((d, i) => { put(6 + i, 0, d); put(6 + i, 6, d); });

  ['0.00500225', '0.00647184', '0.00146959', '29.38%'].forEach((v, i) => put(6, 1 + i, v, 'num'));
  put(6, 9, '0');
  put(6, 10, '#DIV/0!', 'warn');

  put(4, 12, 'Method 1 - Free script', 'b f-grn', 2);
  [['Bet', '0.00001'], ['Chance', '50%'], ['Run-time', '2-4 minutes'], ['# of times/day', 'TBD']].forEach((p, i) => {
    put(5 + i, 12, p[0], 'lft'); put(5 + i, 13, p[1], i === 0 ? 'num' : '');
  });
  put(10, 12, 'Method 2 - Paid Script', 'b f-blu', 2);
  [['Bet', '0.00001'], ['Chance', '50%'], ['Run-time', '2-4 minutes'], ['# of times/day', 'TBD'], ['Type Balance', 'Type it in!'], ['Risk Level', '2']].forEach((p, i) => {
    put(11 + i, 12, p[0], 'lft'); put(11 + i, 13, p[1], i === 0 ? 'num' : '');
  });
  put(22, 12, 'Price of Bitcoin - 11/9/2017', 'b f-pur dt', 2);
  put(23, 12, '$7,300', '', 2);
  put(25, 12, '*Balances are in BTC', 'lft', 2);
  put(26, 12, '**0.005 BTC is worth approximately $35 USD', 'lft', 3);
  put(16, 16, '', 'cur');

  let html = '<colgroup><col style="width:26px">' + colW.map(w => `<col style="width:${w}px">`).join('') + '</colgroup>';
  html += '<thead><tr><th><svg width="24" height="19" viewBox="0 0 24 19"><path d="M20 4v13H7z" fill="#b4b4b4"/></svg></th>';
  letters.forEach(l => { html += `<th class="${l === 'Q' ? 'sel' : ''}">${l}</th>`; });
  html += '</tr></thead><tbody>';
  // row 39 only peeks out under the grid's bottom edge, so it gets no label
  for (let r = 1; r <= 39; r++) {
    html += `<tr class="${r === 1 ? 'tall' : ''}"><th class="${r === 16 ? 'sel' : ''}">${r < 39 ? r : ''}</th>`;
    for (let c = 0; c < colW.length; c++) {
      const cell = cells[r + ':' + c] || { text: '', cls: '', span: 1 };
      const last = c + cell.span - 1;
      const right = boxed(r, last) || boxed(r, last + 1);
      const bottom = boxed(r, c) || boxed(r + 1, c);
      const cls = [cell.cls, right ? 'br' : '', bottom ? 'bb' : ''].join(' ').trim();
      html += `<td class="${cls}"${cell.span > 1 ? ` colspan="${cell.span}"` : ''}>${cell.text}</td>`;
      c = last;
    }
    html += '</tr>';
  }
  document.getElementById('sheet').innerHTML = html + '</tbody>';
</script>
<script src="https://cdn.jsdelivr.net/npm/bootstrap@5.3.0/dist/js/bootstrap.bundle.min.js"></script>
</body>
</html>
